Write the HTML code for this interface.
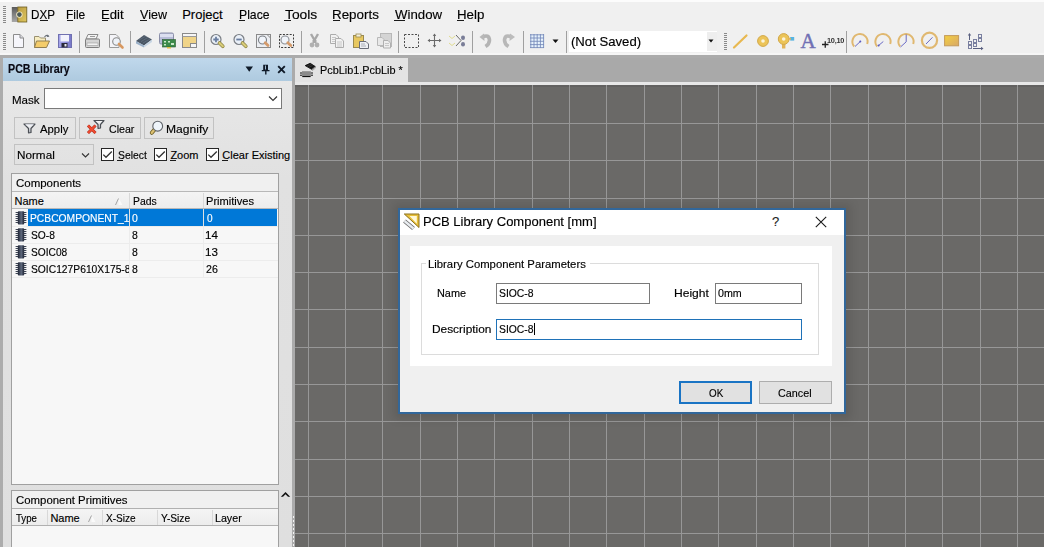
<!DOCTYPE html>
<html><head><meta charset="utf-8">
<style>
*{margin:0;padding:0;box-sizing:border-box}
html,body{width:1044px;height:547px;overflow:hidden;background:#f0f0f0;font-family:"Liberation Sans",sans-serif;color:#1a1a1a}
.a{position:absolute}
.t{position:absolute;white-space:pre;line-height:1;transform-origin:0 0;-webkit-text-stroke:0.15px currentColor}
svg{position:absolute;overflow:visible}
</style></head><body>
<div class="a" style="left:0px;top:0px;width:1044px;height:28px;background:#f0f0f0"></div>
<div class="a" style="left:0px;top:0px;width:1044px;height:1.5px;background:#fcfcfc"></div>
<div class="a" style="left:0px;top:28px;width:1044px;height:27px;background:#f0f0f0"></div>
<div class="a" style="left:0px;top:55px;width:1044px;height:3px;background:#ababab"></div>
<div class="a" style="left:0px;top:53px;width:1044px;height:2px;background:#f6f6f6"></div>
<div class="a" style="left:3px;top:6px;width:3px;height:1px;background:#8a8a8a"></div><div class="a" style="left:3px;top:8px;width:3px;height:1px;background:#8a8a8a"></div><div class="a" style="left:3px;top:10px;width:3px;height:1px;background:#8a8a8a"></div><div class="a" style="left:3px;top:12px;width:3px;height:1px;background:#8a8a8a"></div><div class="a" style="left:3px;top:14px;width:3px;height:1px;background:#8a8a8a"></div><div class="a" style="left:3px;top:16px;width:3px;height:1px;background:#8a8a8a"></div><div class="a" style="left:3px;top:18px;width:3px;height:1px;background:#8a8a8a"></div><div class="a" style="left:3px;top:20px;width:3px;height:1px;background:#8a8a8a"></div><div class="a" style="left:3px;top:22px;width:3px;height:1px;background:#8a8a8a"></div>
<div class="a" style="left:3px;top:33px;width:3px;height:1px;background:#8a8a8a"></div><div class="a" style="left:3px;top:35px;width:3px;height:1px;background:#8a8a8a"></div><div class="a" style="left:3px;top:37px;width:3px;height:1px;background:#8a8a8a"></div><div class="a" style="left:3px;top:39px;width:3px;height:1px;background:#8a8a8a"></div><div class="a" style="left:3px;top:41px;width:3px;height:1px;background:#8a8a8a"></div><div class="a" style="left:3px;top:43px;width:3px;height:1px;background:#8a8a8a"></div><div class="a" style="left:3px;top:45px;width:3px;height:1px;background:#8a8a8a"></div><div class="a" style="left:3px;top:47px;width:3px;height:1px;background:#8a8a8a"></div><div class="a" style="left:3px;top:49px;width:3px;height:1px;background:#8a8a8a"></div>
<div class="a" style="left:724px;top:33px;width:3px;height:1px;background:#8a8a8a"></div><div class="a" style="left:724px;top:35px;width:3px;height:1px;background:#8a8a8a"></div><div class="a" style="left:724px;top:37px;width:3px;height:1px;background:#8a8a8a"></div><div class="a" style="left:724px;top:39px;width:3px;height:1px;background:#8a8a8a"></div><div class="a" style="left:724px;top:41px;width:3px;height:1px;background:#8a8a8a"></div><div class="a" style="left:724px;top:43px;width:3px;height:1px;background:#8a8a8a"></div><div class="a" style="left:724px;top:45px;width:3px;height:1px;background:#8a8a8a"></div><div class="a" style="left:724px;top:47px;width:3px;height:1px;background:#8a8a8a"></div><div class="a" style="left:724px;top:49px;width:3px;height:1px;background:#8a8a8a"></div>
<div class="a" style="left:79px;top:31px;width:1px;height:22px;background:#a0a0a0"></div>
<div class="a" style="left:130px;top:31px;width:1px;height:22px;background:#a0a0a0"></div>
<div class="a" style="left:204px;top:31px;width:1px;height:22px;background:#a0a0a0"></div>
<div class="a" style="left:301px;top:31px;width:1px;height:22px;background:#a0a0a0"></div>
<div class="a" style="left:398px;top:31px;width:1px;height:22px;background:#a0a0a0"></div>
<div class="a" style="left:472px;top:31px;width:1px;height:22px;background:#a0a0a0"></div>
<div class="a" style="left:523px;top:31px;width:1px;height:22px;background:#a0a0a0"></div>
<div class="a" style="left:566px;top:31px;width:1px;height:22px;background:#a0a0a0"></div>
<div class="a" style="left:846px;top:31px;width:1px;height:22px;background:#a0a0a0"></div>
<div class="a" style="left:0px;top:58px;width:3px;height:489px;background:#acacac"></div>
<div class="a" style="left:3px;top:58px;width:289px;height:489px;background:linear-gradient(#e9e9e9,#e1e1e1 120px,#dfdfdf)"></div>
<div class="a" style="left:3px;top:58px;width:289px;height:23px;background:linear-gradient(#c0d8ec,#aecadf)"></div>
<div class="a" style="left:292px;top:58px;width:3px;height:489px;background:#ababab"></div>
<div class="a" style="left:44px;top:88px;width:238px;height:21px;background:#fff;border:1px solid #7a7a7a"></div>
<div class="a" style="left:14px;top:117px;width:62px;height:22px;background:transparent;border:1px solid #c2c2c2"></div>
<div class="a" style="left:79px;top:117px;width:62px;height:22px;background:transparent;border:1px solid #c2c2c2"></div>
<div class="a" style="left:144px;top:117px;width:70px;height:22px;background:transparent;border:1px solid #c2c2c2"></div>
<div class="a" style="left:14px;top:144px;width:80px;height:21px;background:transparent;border:1px solid #c2c2c2"></div>
<div class="a" style="left:101px;top:148px;width:13px;height:13px;background:#fff;border:1.2px solid #262626"></div>
<div class="a" style="left:154px;top:148px;width:13px;height:13px;background:#fff;border:1.2px solid #262626"></div>
<div class="a" style="left:206px;top:148px;width:13px;height:13px;background:#fff;border:1.2px solid #262626"></div>
<div class="a" style="left:11px;top:173px;width:268px;height:312px;background:#f7f7f7;border:1px solid #a0a0a0"></div>
<div class="a" style="left:12px;top:174px;width:266px;height:18px;background:#f0f0f0"></div>
<div class="a" style="left:12px;top:191px;width:266px;height:1px;background:#b8b8b8"></div>
<div class="a" style="left:12px;top:192px;width:266px;height:17px;background:linear-gradient(#f4f4f4,#ececec)"></div>
<div class="a" style="left:12px;top:208px;width:266px;height:1px;background:#b8b8b8"></div>
<div class="a" style="left:129px;top:193px;width:1px;height:15px;background:#d8d8d8"></div>
<div class="a" style="left:203px;top:193px;width:1px;height:15px;background:#d8d8d8"></div>
<div class="a" style="left:28px;top:209px;width:249px;height:17px;background:#0078d7"></div>
<div class="a" style="left:129px;top:209px;width:1px;height:17px;background:#e0e0e0"></div>
<div class="a" style="left:203px;top:209px;width:1px;height:17px;background:#e0e0e0"></div>
<div class="a" style="left:12px;top:226px;width:266px;height:1px;background:#ececec"></div>
<div class="a" style="left:12px;top:243px;width:266px;height:1px;background:#ececec"></div>
<div class="a" style="left:12px;top:260px;width:266px;height:1px;background:#ececec"></div>
<div class="a" style="left:12px;top:277px;width:266px;height:1px;background:#ececec"></div>
<div class="a" style="left:129px;top:226px;width:1px;height:17px;background:#ececec"></div>
<div class="a" style="left:203px;top:226px;width:1px;height:17px;background:#ececec"></div>
<div class="a" style="left:129px;top:243px;width:1px;height:17px;background:#ececec"></div>
<div class="a" style="left:203px;top:243px;width:1px;height:17px;background:#ececec"></div>
<div class="a" style="left:129px;top:260px;width:1px;height:17px;background:#ececec"></div>
<div class="a" style="left:203px;top:260px;width:1px;height:17px;background:#ececec"></div>
<div class="a" style="left:11px;top:490px;width:268px;height:70px;background:#f7f7f7;border:1px solid #a0a0a0"></div>
<div class="a" style="left:12px;top:491px;width:266px;height:17px;background:#f0f0f0"></div>
<div class="a" style="left:12px;top:508px;width:266px;height:1px;background:#b0b0b0"></div>
<div class="a" style="left:12px;top:509px;width:266px;height:17px;background:linear-gradient(#f4f4f4,#ececec)"></div>
<div class="a" style="left:12px;top:525px;width:266px;height:1px;background:#b0b0b0"></div>
<div class="a" style="left:47px;top:510px;width:1px;height:15px;background:#d8d8d8"></div>
<div class="a" style="left:102px;top:510px;width:1px;height:15px;background:#d8d8d8"></div>
<div class="a" style="left:157px;top:510px;width:1px;height:15px;background:#d8d8d8"></div>
<div class="a" style="left:212px;top:510px;width:1px;height:15px;background:#d8d8d8"></div>
<div class="a" style="left:295px;top:58px;width:749px;height:24px;background:#a9a9a9"></div>
<div class="a" style="left:295px;top:58px;width:113px;height:24px;background:#e3e3e3"></div>
<div class="a" style="left:295px;top:82px;width:749px;height:3px;background:#e8e8e8"></div>
<div class="a" style="left:295px;top:85px;width:749px;height:462px;background:#6a6967"></div>
<div class="a" style="left:295px;top:85px;width:749px;height:2px;background:#626160"></div>
<div class="a" style="left:308px;top:85px;width:1px;height:462px;background:#979797"></div><div class="a" style="left:345px;top:85px;width:1px;height:462px;background:#979797"></div><div class="a" style="left:382px;top:85px;width:1px;height:462px;background:#979797"></div><div class="a" style="left:420px;top:85px;width:1px;height:462px;background:#979797"></div><div class="a" style="left:457px;top:85px;width:1px;height:462px;background:#979797"></div><div class="a" style="left:494px;top:85px;width:1px;height:462px;background:#979797"></div><div class="a" style="left:532px;top:85px;width:1px;height:462px;background:#979797"></div><div class="a" style="left:569px;top:85px;width:1px;height:462px;background:#979797"></div><div class="a" style="left:606px;top:85px;width:1px;height:462px;background:#979797"></div><div class="a" style="left:644px;top:85px;width:1px;height:462px;background:#979797"></div><div class="a" style="left:681px;top:85px;width:1px;height:462px;background:#979797"></div><div class="a" style="left:718px;top:85px;width:1px;height:462px;background:#979797"></div><div class="a" style="left:756px;top:85px;width:1px;height:462px;background:#979797"></div><div class="a" style="left:793px;top:85px;width:1px;height:462px;background:#979797"></div><div class="a" style="left:830px;top:85px;width:1px;height:462px;background:#979797"></div><div class="a" style="left:868px;top:85px;width:1px;height:462px;background:#979797"></div><div class="a" style="left:905px;top:85px;width:1px;height:462px;background:#979797"></div><div class="a" style="left:942px;top:85px;width:1px;height:462px;background:#979797"></div><div class="a" style="left:980px;top:85px;width:1px;height:462px;background:#979797"></div><div class="a" style="left:1017px;top:85px;width:1px;height:462px;background:#979797"></div><div class="a" style="left:295px;top:123px;width:749px;height:1px;background:#979797"></div><div class="a" style="left:295px;top:160px;width:749px;height:1px;background:#979797"></div><div class="a" style="left:295px;top:198px;width:749px;height:1px;background:#979797"></div><div class="a" style="left:295px;top:235px;width:749px;height:1px;background:#979797"></div><div class="a" style="left:295px;top:272px;width:749px;height:1px;background:#979797"></div><div class="a" style="left:295px;top:309px;width:749px;height:1px;background:#979797"></div><div class="a" style="left:295px;top:347px;width:749px;height:1px;background:#979797"></div><div class="a" style="left:295px;top:384px;width:749px;height:1px;background:#979797"></div><div class="a" style="left:295px;top:421px;width:749px;height:1px;background:#979797"></div><div class="a" style="left:295px;top:459px;width:749px;height:1px;background:#979797"></div><div class="a" style="left:295px;top:496px;width:749px;height:1px;background:#979797"></div><div class="a" style="left:295px;top:533px;width:749px;height:1px;background:#979797"></div>
<div class="a" style="left:569px;top:31px;width:148px;height:21px;background:#fff"></div>
<div class="a" style="left:707px;top:32px;width:10px;height:19px;background:#eeeeee"></div>
<div class="a" style="left:394px;top:204px;width:457px;height:215px;background:rgba(0,0,0,0.10);filter:blur(4px)"></div>
<div class="a" style="left:398px;top:208px;width:448px;height:206px;background:#f0f0f0;border:2px solid #31679b"></div>
<div class="a" style="left:400px;top:210px;width:444px;height:25px;background:#fff"></div>
<div class="a" style="left:410px;top:246px;width:422px;height:120px;background:#fff"></div>
<div class="a" style="left:421px;top:263px;width:398px;height:92px;border:1px solid #dcdcdc"></div>
<div class="a" style="left:426px;top:258px;width:164px;height:10px;background:#fff"></div>
<div class="a" style="left:496px;top:283px;width:154px;height:21px;background:#fff;border:1px solid #7a7a7a"></div>
<div class="a" style="left:715px;top:283px;width:87px;height:21px;background:#fff;border:1px solid #7a7a7a"></div>
<div class="a" style="left:496px;top:319px;width:306px;height:21px;background:#fff;border:1px solid #1f72b8"></div>
<div class="a" style="left:679px;top:381px;width:73px;height:23px;background:#e1e1e1;border:2px solid #1a74c4"></div>
<div class="a" style="left:759px;top:381px;width:73px;height:23px;background:#e1e1e1;border:1px solid #adadad"></div>
<svg style="left:11px;top:7px" width="16" height="15" viewBox="0 0 16 15"><defs><linearGradient id="lg1" x1="0" y1="0" x2="0" y2="1"><stop offset="0" stop-color="#5a5a5a"/><stop offset="1" stop-color="#a8a8a8"/></linearGradient>
<linearGradient id="lg2" x1="0" y1="0" x2="1" y2="1"><stop offset="0" stop-color="#b89a40"/><stop offset="1" stop-color="#e0c860"/></linearGradient></defs>
<rect x="0.8" y="0" width="6" height="15" fill="url(#lg1)"/><rect x="6.8" y="0" width="9" height="15" fill="url(#lg2)"/>
<rect x="6.8" y="0" width="9" height="15" fill="none" stroke="#6a5a20" stroke-width="0.8"/>
<circle cx="8.4" cy="7.6" r="3.2" fill="#f0e8c0"/><circle cx="8.4" cy="7.6" r="2.3" fill="#4a5858"/></svg>
<svg style="left:12px;top:33px" width="13" height="16" viewBox="0 0 13 16"><path d="M1.5,1.5 H8 L11.5,5 V14.5 H1.5 Z" fill="#f6f6fb" stroke="#8c8c8c"/><path d="M8,1.5 V5 H11.5" fill="#d8d8e0" stroke="#8c8c8c"/></svg>
<svg style="left:33px;top:33px" width="18" height="16" viewBox="0 0 18 16"><path d="M1.5,3.5 H6 L7.5,5 H12.5 V14.5 H1.5 Z" fill="#f6ecc0" stroke="#9a9070"/>
<path d="M3.5,8 H16.5 L13.5,14.5 H1.5 Z" fill="#f4cc6a" stroke="#927e50"/>
<path d="M11.5,4 Q13.5,1.5 15.5,3" fill="none" stroke="#6a7078" stroke-width="1.2"/><path d="M14.5,1.6 L16.5,3.8 L13.8,4.1 Z" fill="#6a7078"/></svg>
<svg style="left:57px;top:33px" width="16" height="16" viewBox="0 0 16 16"><defs><linearGradient id="sg" x1="0" y1="0" x2="1" y2="0"><stop offset="0" stop-color="#a8a8ec"/><stop offset="1" stop-color="#7878c8"/></linearGradient></defs><rect x="1.5" y="1.5" width="13" height="13" fill="url(#sg)" stroke="#7070b0"/>
<rect x="3.5" y="2" width="8.5" height="6.5" fill="#f2f2fc"/><rect x="4.5" y="10" width="6" height="4.5" fill="#2a2a3a"/><rect x="7.5" y="11" width="2" height="2.5" fill="#e8e8f0"/></svg>
<svg style="left:84px;top:33px" width="17" height="16" viewBox="0 0 17 16"><path d="M4,1.5 H14 L12,6 H2 Z" fill="#f4f4f4" stroke="#8a8a8a"/>
<rect x="1.5" y="6" width="14" height="8.5" rx="1" fill="#d4d4d4" stroke="#7e7e7e"/><rect x="3" y="10" width="11" height="2.5" fill="#f2f2f2" stroke="#9a9a9a" stroke-width="0.6"/>
<line x1="6" y1="3.5" x2="11" y2="3.5" stroke="#9a9a9a"/></svg>
<svg style="left:108px;top:33px" width="17" height="17" viewBox="0 0 17 17"><path d="M1.5,1.5 H8 L11,4.5 V14.5 H1.5 Z" fill="#f4f4f8" stroke="#9a9a9a"/>
<circle cx="8.5" cy="8.5" r="3.8" fill="#eef2f8" stroke="#8a8a8a" stroke-width="1.1"/><path d="M11,11 L14.5,14.5" stroke="#d89860" stroke-width="2.6" stroke-linecap="round"/></svg>
<svg style="left:135px;top:33px" width="18" height="15" viewBox="0 0 18 15"><path d="M1,8 L9,2 L17,6.5 L9,12.5 Z" fill="#4a5664"/><path d="M1,8 V10.5 L9,14.5 V12.5 Z" fill="#9ab0c8"/><path d="M9,12.5 V14.5 L17,9 V6.5 Z" fill="#c8d6e4"/>
<path d="M4,7 L11,3 M6,8.6 L13,4.4 M8,10 L15,6" stroke="#6a7888" stroke-width="0.6"/></svg>
<svg style="left:159px;top:32px" width="17" height="17" viewBox="0 0 17 17"><rect x="0.5" y="1" width="14" height="11" rx="1.5" fill="#b8bcd8" stroke="#8a8ea8"/><rect x="1" y="2" width="13" height="3" fill="#dcdff0"/>
<rect x="3.5" y="7.5" width="13" height="7.5" fill="#3c8a4a" stroke="#2a5a30" stroke-width="0.6"/><rect x="5" y="9" width="2" height="1.5" fill="#c8e8c8"/><rect x="9" y="9" width="2" height="1.5" fill="#c8e8c8"/><rect x="5" y="12" width="2" height="1.5" fill="#c8e8c8"/><rect x="12" y="11" width="3" height="2" fill="#c8e8c8"/>
<rect x="8" y="15" width="4" height="1.5" fill="#e0c040"/></svg>
<svg style="left:181px;top:32px" width="17" height="17" viewBox="0 0 17 17"><rect x="1.5" y="1.5" width="14" height="14" fill="#f0d488" stroke="#8a8a8a"/><rect x="2" y="2" width="13" height="2.5" fill="#f6f6f6"/><line x1="1.5" y1="4.5" x2="15.5" y2="4.5" stroke="#9a9a9a"/>
<rect x="9.5" y="11.5" width="6" height="4" fill="#f6f6f6" stroke="#8a8a8a"/></svg>
<svg style="left:209px;top:33px" width="16" height="16" viewBox="0 0 16 16"><circle cx="7" cy="6.5" r="5" fill="#eaf0f8" stroke="#7a7e84" stroke-width="1.2"/><path d="M4.3,6.5 H9.7 M7,3.8 V9.2" stroke="#6a7ea0" stroke-width="1.8"/><path d="M10.5,10 L13.8,13.3" stroke="#8a8040" stroke-width="3.6" stroke-linecap="round"/><path d="M10.5,10 L13.8,13.3" stroke="#d8cc78" stroke-width="2.2" stroke-linecap="round"/></svg>
<svg style="left:232px;top:33px" width="16" height="16" viewBox="0 0 16 16"><circle cx="7" cy="6.5" r="5" fill="#eaf0f8" stroke="#7a7e84" stroke-width="1.2"/><path d="M4.3,6.5 H9.7" stroke="#6a7ea0" stroke-width="1.8"/><path d="M10.5,10 L13.8,13.3" stroke="#8a8040" stroke-width="3.6" stroke-linecap="round"/><path d="M10.5,10 L13.8,13.3" stroke="#d8cc78" stroke-width="2.2" stroke-linecap="round"/></svg>
<svg style="left:255px;top:33px" width="17" height="16" viewBox="0 0 17 16"><rect x="1.5" y="1.5" width="14" height="13" fill="#eceef2" stroke="#8a8a8a"/><path d="M12,1.5 L15.5,5" stroke="#8a8a8a"/>
<circle cx="7.5" cy="7" r="4" fill="#f0f4fa" stroke="#7a7e84" stroke-width="1.1"/><path d="M10.2,9.8 L13,12.6" stroke="#d49a6a" stroke-width="2.8" stroke-linecap="round"/></svg>
<svg style="left:278px;top:33px" width="17" height="16" viewBox="0 0 17 16"><rect x="1.5" y="1.5" width="14" height="13" fill="none" stroke="#3a3a3a" stroke-dasharray="2,1.4"/>
<circle cx="7" cy="7" r="4" fill="#f0f4fa" stroke="#8a8e94" stroke-width="1.1"/><path d="M9.8,9.8 L12.8,12.6" stroke="#d49a6a" stroke-width="2.8" stroke-linecap="round"/></svg>
<svg style="left:309px;top:33px" width="11" height="15" viewBox="0 0 11 15"><path d="M2,1 L6,8 M9,1 L5,8" stroke="#a8a8a8" stroke-width="2.4"/><circle cx="3" cy="12" r="2.4" fill="#b0b0b0"/><circle cx="8" cy="12" r="2.4" fill="#b0b0b0"/><rect x="3.5" y="7" width="4" height="3" fill="#a8a8a8"/></svg>
<svg style="left:329px;top:33px" width="17" height="15" viewBox="0 0 17 15"><path d="M1.5,1.5 H7 L9.5,4 V10.5 H1.5 Z" fill="#f2f2f2" stroke="#acacac"/><path d="M6.5,5.5 H12 L14.5,8 V14.5 H6.5 Z" fill="#f2f2f2" stroke="#acacac"/>
<path d="M3,4.5 H7 M3,6.5 H7 M3,8.5 H6 M8,9 H13 M8,11 H13 M8,13 H13" stroke="#bcbcbc" stroke-width="0.8"/></svg>
<svg style="left:352px;top:33px" width="18" height="16" viewBox="0 0 18 16"><rect x="1.5" y="2.5" width="10" height="12" fill="#e8c860" stroke="#9a8a50"/><rect x="4" y="1" width="5" height="3" fill="#f6f0d8" stroke="#9a8a50" stroke-width="0.8"/>
<path d="M7.5,8.5 H14 L16.5,11 V15.5 H7.5 Z" fill="#eef0f4" stroke="#6a6e78"/><path d="M9,11 H13 M9,13 H14" stroke="#9aa0a8" stroke-width="0.8"/></svg>
<svg style="left:376px;top:32px" width="17" height="17" viewBox="0 0 17 17"><rect x="4.5" y="1.5" width="11" height="13" fill="#d4d4d4" stroke="#b8b8b8"/><path d="M1.5,5.5 H6 L8,7.5 V13.5 H1.5 Z" fill="#e8e8e8" stroke="#b8b8b8"/>
<path d="M7.5,8.5 H12 L14.5,11 V16 H7.5 Z" fill="#eeeeee" stroke="#b0b0b0"/><path d="M9,11.5 H13 M9,13.5 H13" stroke="#bcbcbc" stroke-width="0.8"/></svg>
<svg style="left:403px;top:33px" width="17" height="16" viewBox="0 0 17 16"><rect x="1.5" y="1.5" width="14" height="13" fill="none" stroke="#4a4a4a" stroke-dasharray="2,1.5"/></svg>
<svg style="left:427px;top:33px" width="15" height="15" viewBox="0 0 15 15"><path d="M7.5,1 V14 M1,7.5 H14" stroke="#6a6a6a" stroke-width="1.1"/><path d="M7.5,0.5 L5.8,3 H9.2 Z M7.5,14.5 L5.8,12 H9.2 Z M0.5,7.5 L3,5.8 V9.2 Z M14.5,7.5 L12,5.8 V9.2 Z" fill="#6a6a6a"/></svg>
<svg style="left:448px;top:33px" width="18" height="15" viewBox="0 0 18 15"><path d="M1,3 L4,5.5 L7,3 M1,10 L4,12.5 L7,10" fill="none" stroke="#e0dc90" stroke-width="1"/><path d="M8,2 L13,7.5 L8,13" fill="none" stroke="#5a5a5a" stroke-width="0.9"/>
<ellipse cx="15" cy="4.7" rx="2" ry="2.3" fill="#7a7e98"/><ellipse cx="15" cy="11.3" rx="2" ry="2.3" fill="#7a7e98"/></svg>
<svg style="left:479px;top:33px" width="13" height="15" viewBox="0 0 13 15"><path d="M3.5,4 Q10,1 10.5,7 Q10.5,11 6.5,13.5" fill="none" stroke="#b4b4b4" stroke-width="3.6"/><path d="M0.5,4 L5,0.5 L5.5,8 Z" fill="#b8b8b8"/></svg>
<svg style="left:502px;top:33px" width="14" height="15" viewBox="0 0 14 15"><path d="M9.5,4 Q3,1 2.5,7 Q2.5,11 6.5,13.5" fill="none" stroke="#b8b8b8" stroke-width="3.6"/><path d="M13,4 L8,0.5 L7.5,8 Z" fill="#bcbcbc"/></svg>
<svg style="left:529px;top:33px" width="16" height="16" viewBox="0 0 16 16"><rect x="1" y="1.5" width="14" height="13" fill="#e6f2fc"/>
<path d="M1.8,1 V15 M5,1 V15 M8.2,1 V15 M11.4,1 V15 M14.6,1 V15 M1,1.8 H15 M1,5 H15 M1,8.3 H15 M1,11.6 H15 M1,14.6 H15" stroke="#7488b8" stroke-width="0.85"/></svg>
<svg style="left:552px;top:39px" width="7" height="5" viewBox="0 0 7 5"><path d="M0.5,0.5 H6.5 L3.5,4 Z" fill="#111"/></svg>
<svg style="left:708px;top:39px" width="6" height="5" viewBox="0 0 6 5"><path d="M0.5,0.5 H5.5 L3,3.5 Z" fill="#111"/></svg>
<svg style="left:733px;top:34px" width="15" height="15" viewBox="0 0 15 15"><path d="M1,13.5 L13.5,1.5" stroke="#e8b850" stroke-width="2.2" stroke-linecap="round"/></svg>
<svg style="left:756px;top:34px" width="14" height="14" viewBox="0 0 14 14"><circle cx="7" cy="7" r="5.4" fill="#ecc458" stroke="#d2a848" stroke-width="1"/><circle cx="7" cy="7" r="1.8" fill="#fbf4dc"/></svg>
<svg style="left:777px;top:33px" width="18" height="16" viewBox="0 0 18 16"><rect x="5" y="7" width="3.4" height="8.5" fill="#e2b458"/><circle cx="6.7" cy="6" r="5.4" fill="#ecc458" stroke="#d2a848"/><circle cx="6.7" cy="6" r="1.8" fill="#fbf4dc"/><rect x="13.2" y="4" width="4" height="3.6" fill="#58b4e0"/><rect x="11" y="5" width="3" height="1.6" fill="#e2b458"/></svg>
<span class="t" style="left:800.5px;top:31px;font-family:'Liberation Serif',serif;font-size:21px;font-weight:normal;color:#7070b4;line-height:1;-webkit-text-stroke:0.5px #7070b4">A</span>
<svg style="left:821px;top:40px" width="9" height="9" viewBox="0 0 9 9"><path d="M1,4.5 H7.5 M4.25,1.3 V7.8" stroke="#222" stroke-width="1.3"/></svg>
<span class="t" style="left:827.3px;top:36.5px;font-size:8px;font-weight:bold;color:#333;letter-spacing:-0.3px;transform:scaleX(0.92);-webkit-text-stroke:0">10,10</span>
<svg style="left:851px;top:33px" width="19" height="16" viewBox="0 0 19 16"><path d="M3.2,13.5 A7.6,7.6 0 1 1 16.2,11" fill="none" stroke="#e0b870" stroke-width="2"/><path d="M4,13.5 L9.3,8.5" stroke="#5a5ac0" stroke-width="0.9"/><circle cx="9.3" cy="8.5" r="1" fill="#5a5ac0"/></svg>
<svg style="left:874px;top:33px" width="19" height="16" viewBox="0 0 19 16"><path d="M3.2,13.5 A7.6,7.6 0 1 1 16.2,11" fill="none" stroke="#e0b870" stroke-width="2"/><path d="M4,13 L9.3,8.5" stroke="#5a5ac0" stroke-width="0.9"/><circle cx="4.6" cy="12.5" r="1" fill="#5a5ac0"/></svg>
<svg style="left:897px;top:33px" width="19" height="16" viewBox="0 0 19 16"><path d="M3.2,13.5 A7.6,7.6 0 1 1 16.2,11" fill="none" stroke="#e0b870" stroke-width="2"/><path d="M3.5,14 L9.2,8.8 V1.5" fill="none" stroke="#5a5ac0" stroke-width="0.9"/></svg>
<svg style="left:920px;top:31px" width="19" height="19" viewBox="0 0 19 19"><circle cx="9.5" cy="9.3" r="7.6" fill="none" stroke="#e0b870" stroke-width="2.2"/><path d="M6,13 L12.5,6.3" stroke="#5a5ac0" stroke-width="0.9"/></svg>
<svg style="left:944px;top:35px" width="16" height="12" viewBox="0 0 16 12"><defs><linearGradient id="rg" x1="0" y1="0" x2="1" y2="1"><stop offset="0" stop-color="#f4d040"/><stop offset="1" stop-color="#d8a868"/></linearGradient></defs><rect x="0.6" y="0.6" width="14" height="10.2" fill="url(#rg)" stroke="#c49a5a" stroke-width="1"/></svg>
<svg style="left:967px;top:33px" width="17" height="17" viewBox="0 0 17 17"><g fill="none" stroke="#7a80a0" stroke-width="1"><rect x="1.5" y="8.5" width="3" height="3"/><rect x="1.5" y="12.5" width="3" height="3"/><rect x="6.5" y="6.5" width="3" height="3"/><rect x="6.5" y="10.5" width="3" height="3"/><rect x="11.5" y="1.5" width="3" height="3"/><rect x="11.5" y="5.5" width="3" height="3"/></g>
<path d="M2.5,7 V1 M6,15.5 H15.5" stroke="#5a6080" stroke-width="1"/><path d="M2.5,0 L0.8,2.6 H4.2 Z M16.5,15.5 L14,13.8 V17.2 Z" fill="#5a6080"/></svg>
<svg style="left:245px;top:66px" width="9" height="7" viewBox="0 0 9 7"><path d="M0.5,0.5 H8 L4.25,5.8 Z" fill="#0f1a28"/></svg>
<svg style="left:261px;top:64px" width="9" height="11" viewBox="0 0 9 11"><path d="M2.2,0.8 H7 V6 H8.5 V7.3 H0.8 V6 H2.2 Z" fill="#0f1a28"/><rect x="4" y="1.5" width="1" height="4" fill="#a0bcd4"/><rect x="4.1" y="7" width="1.4" height="3.5" fill="#0f1a28"/></svg>
<svg style="left:277px;top:65px" width="9" height="9" viewBox="0 0 9 9"><path d="M1.2,1.2 L7.8,7.8 M7.8,1.2 L1.2,7.8" stroke="#0f1a28" stroke-width="1.9"/></svg>
<svg style="left:299px;top:61px" width="19" height="17" viewBox="0 0 19 17"><path d="M6.2,4.6 L11.2,2.3 L16.3,5.6 L12.8,8.4 Z" fill="#141414" stroke="#141414" stroke-width="0.9" stroke-linejoin="round"/>
<path d="M12.8,8.6 L16.5,5.6 L16.5,7 L13,9.8" fill="none" stroke="#9a9a9a" stroke-width="0.8"/><path d="M8,5.2 L12,3.5 M9.5,6.4 L13.5,4.6" stroke="#555" stroke-width="0.5"/>
<rect x="3" y="10.2" width="8.8" height="5.2" fill="#8a8a8a"/><rect x="3.3" y="15" width="8.3" height="1.1" fill="#111"/>
<path d="M1,12 H3 M1,14.2 H3 M11.8,12 H14 M11.8,14.2 H14" stroke="#111" stroke-width="1"/></svg>
<svg style="left:268px;top:95px" width="10" height="7" viewBox="0 0 10 7"><path d="M1,1.5 L5,5.5 L9,1.5" fill="none" stroke="#333" stroke-width="1.1"/></svg>
<svg style="left:81px;top:152px" width="10" height="7" viewBox="0 0 10 7"><path d="M1,1.5 L4.5,5 L8,1.5" fill="none" stroke="#333" stroke-width="1.1"/></svg>
<svg style="left:101px;top:148px" width="13" height="13" viewBox="0 0 13 13"><path d="M2.3,6.6 L5,9.3 L10.8,3.5" fill="none" stroke="#333" stroke-width="1.3"/></svg>
<svg style="left:154px;top:148px" width="13" height="13" viewBox="0 0 13 13"><path d="M2.3,6.6 L5,9.3 L10.8,3.5" fill="none" stroke="#333" stroke-width="1.3"/></svg>
<svg style="left:206px;top:148px" width="13" height="13" viewBox="0 0 13 13"><path d="M2.3,6.6 L5,9.3 L10.8,3.5" fill="none" stroke="#333" stroke-width="1.3"/></svg>
<svg style="left:23px;top:123px" width="13" height="11" viewBox="0 0 13 11"><defs><linearGradient id="fg" x1="0" y1="0" x2="0" y2="1"><stop offset="0" stop-color="#ffffff"/><stop offset="1" stop-color="#b8bcc4"/></linearGradient></defs><path d="M1,1 H12 L8,5.5 V9.5 L5.5,10 V5.5 Z" fill="url(#fg)" stroke="#4a4e54" stroke-width="1.2" stroke-linejoin="round"/><path d="M2.5,1.8 H10.5" stroke="#e8ecf4" stroke-width="1"/></svg>
<svg style="left:86px;top:119px" width="19" height="16" viewBox="0 0 19 16"><path d="M8,1.5 H18 L14.5,5.5 V9 L12,9.5 V5.5 Z" fill="url(#fg)" stroke="#4a4e54" stroke-width="1.2" stroke-linejoin="round"/>
<path d="M2,6.5 L9.5,14 M9.5,6.5 L2,14" stroke="#a83020" stroke-width="3"/><path d="M2,6.5 L9.5,14 M9.5,6.5 L2,14" stroke="#f04a30" stroke-width="1.8"/></svg>
<svg style="left:149px;top:119px" width="15" height="16" viewBox="0 0 15 16"><path d="M6,10 L2.8,13.8" stroke="#6a5a20" stroke-width="4" stroke-linecap="round"/><path d="M6,10 L2.8,13.8" stroke="#dcc070" stroke-width="2.4" stroke-linecap="round"/>
<circle cx="8.7" cy="7.2" r="4.9" fill="#eef4fa" stroke="#5e6268" stroke-width="1.1"/></svg>
<svg style="left:15px;top:211px" width="12" height="14" viewBox="0 0 12 14"><defs><linearGradient id="cg" x1="0" y1="0" x2="1" y2="0"><stop offset="0" stop-color="#1e2434"/><stop offset="0.55" stop-color="#5e687c"/><stop offset="1" stop-color="#1e2434"/></linearGradient></defs>
<path d="M0.6,1.5 H3 M0.6,3.5 H3 M0.6,5.5 H3 M0.6,7.5 H3 M0.6,9.5 H3 M0.6,11.5 H3 M9,1.5 H11.4 M9,3.5 H11.4 M9,5.5 H11.4 M9,7.5 H11.4 M9,9.5 H11.4 M9,11.5 H11.4" stroke="#2a3244" stroke-width="0.9"/>
<rect x="2.8" y="0.2" width="6.4" height="13.2" rx="1" fill="url(#cg)"/></svg>
<svg style="left:15px;top:228px" width="12" height="14" viewBox="0 0 12 14"><defs><linearGradient id="cg" x1="0" y1="0" x2="1" y2="0"><stop offset="0" stop-color="#1e2434"/><stop offset="0.55" stop-color="#5e687c"/><stop offset="1" stop-color="#1e2434"/></linearGradient></defs>
<path d="M0.6,1.5 H3 M0.6,3.5 H3 M0.6,5.5 H3 M0.6,7.5 H3 M0.6,9.5 H3 M0.6,11.5 H3 M9,1.5 H11.4 M9,3.5 H11.4 M9,5.5 H11.4 M9,7.5 H11.4 M9,9.5 H11.4 M9,11.5 H11.4" stroke="#2a3244" stroke-width="0.9"/>
<rect x="2.8" y="0.2" width="6.4" height="13.2" rx="1" fill="url(#cg)"/></svg>
<svg style="left:15px;top:245px" width="12" height="14" viewBox="0 0 12 14"><defs><linearGradient id="cg" x1="0" y1="0" x2="1" y2="0"><stop offset="0" stop-color="#1e2434"/><stop offset="0.55" stop-color="#5e687c"/><stop offset="1" stop-color="#1e2434"/></linearGradient></defs>
<path d="M0.6,1.5 H3 M0.6,3.5 H3 M0.6,5.5 H3 M0.6,7.5 H3 M0.6,9.5 H3 M0.6,11.5 H3 M9,1.5 H11.4 M9,3.5 H11.4 M9,5.5 H11.4 M9,7.5 H11.4 M9,9.5 H11.4 M9,11.5 H11.4" stroke="#2a3244" stroke-width="0.9"/>
<rect x="2.8" y="0.2" width="6.4" height="13.2" rx="1" fill="url(#cg)"/></svg>
<svg style="left:15px;top:262px" width="12" height="14" viewBox="0 0 12 14"><defs><linearGradient id="cg" x1="0" y1="0" x2="1" y2="0"><stop offset="0" stop-color="#1e2434"/><stop offset="0.55" stop-color="#5e687c"/><stop offset="1" stop-color="#1e2434"/></linearGradient></defs>
<path d="M0.6,1.5 H3 M0.6,3.5 H3 M0.6,5.5 H3 M0.6,7.5 H3 M0.6,9.5 H3 M0.6,11.5 H3 M9,1.5 H11.4 M9,3.5 H11.4 M9,5.5 H11.4 M9,7.5 H11.4 M9,9.5 H11.4 M9,11.5 H11.4" stroke="#2a3244" stroke-width="0.9"/>
<rect x="2.8" y="0.2" width="6.4" height="13.2" rx="1" fill="url(#cg)"/></svg>
<svg style="left:114px;top:197px" width="10" height="9" viewBox="0 0 10 9"><path d="M4.5,1 L8.5,8 H4.5 Z" fill="#fafafa"/><path d="M1.5,8 L4.5,1.5" stroke="#9a9a9a" stroke-width="0.9"/></svg>
<svg style="left:87px;top:514px" width="10" height="9" viewBox="0 0 10 9"><path d="M4.5,1 L8.5,8 H4.5 Z" fill="#fafafa"/><path d="M1.5,8 L4.5,1.5" stroke="#9a9a9a" stroke-width="0.9"/></svg>
<svg style="left:280px;top:491px" width="11" height="7" viewBox="0 0 11 7"><path d="M0.8,5.8 L5.5,1 L10.2,5.8 H8 L5.5,3.3 L3,5.8 Z" fill="#111"/></svg>
<div class="a" style="left:293px;top:516px;width:1px;height:2px;background:#f4f4f4"></div>
<div class="a" style="left:293px;top:520px;width:1px;height:2px;background:#f4f4f4"></div>
<div class="a" style="left:293px;top:524px;width:1px;height:2px;background:#f4f4f4"></div>
<div class="a" style="left:293px;top:528px;width:1px;height:2px;background:#f4f4f4"></div>
<div class="a" style="left:293px;top:532px;width:1px;height:2px;background:#f4f4f4"></div>
<div class="a" style="left:293px;top:536px;width:1px;height:2px;background:#f4f4f4"></div>
<div class="a" style="left:293px;top:540px;width:1px;height:2px;background:#f4f4f4"></div>
<div class="a" style="left:293px;top:544px;width:1px;height:2px;background:#f4f4f4"></div>
<svg style="left:403px;top:213px" width="17" height="16" viewBox="0 0 17 16"><path d="M1.3,1 H16 V14.5 Z" fill="#e8c03a" stroke="#8a7020" stroke-width="1"/><path d="M6.5,3 H13.8 V10.8 Z" fill="#fff8d8"/>
<path d="M1.5,8 L10.5,15.5" stroke="#6a6a6a" stroke-width="4.2"/><path d="M1.5,8 L10.5,15.5" stroke="#e8ecf0" stroke-width="2.4"/></svg>
<span class="t" style="left:772px;top:215px;font-size:13px;color:#222">?</span>
<svg style="left:815px;top:216px" width="12" height="12" viewBox="0 0 12 12"><path d="M0.8,0.8 L11.2,11.2 M11.2,0.8 L0.8,11.2" stroke="#1a1a1a" stroke-width="1.1"/></svg>
<span class="t" style="left:30.8px;top:8px;font-size:13px;font-weight:normal;color:#000;transform:scaleX(0.8960);">DXP</span>
<span class="t" style="left:66.28px;top:8px;font-size:13px;font-weight:normal;color:#000;transform:scaleX(0.9200);">File</span>
<span class="t" style="left:100.79px;top:8px;font-size:13px;font-weight:normal;color:#000;transform:scaleX(1.0091);">Edit</span>
<span class="t" style="left:140.1px;top:8px;font-size:13px;font-weight:normal;color:#000;transform:scaleX(0.9643);">View</span>
<span class="t" style="left:182.2px;top:8px;font-size:13px;font-weight:normal;color:#000;">Project</span>
<span class="t" style="left:238.56px;top:8px;font-size:13px;font-weight:normal;color:#000;transform:scaleX(0.9387);">Place</span>
<span class="t" style="left:284.8px;top:8px;font-size:13px;font-weight:normal;color:#000;transform:scaleX(1.0633);">Tools</span>
<span class="t" style="left:332.37px;top:8px;font-size:13px;font-weight:normal;color:#000;transform:scaleX(1.0295);">Reports</span>
<span class="t" style="left:394.9px;top:8px;font-size:13px;font-weight:normal;color:#000;transform:scaleX(1.0174);">Window</span>
<span class="t" style="left:456.88px;top:8px;font-size:13px;font-weight:normal;color:#000;transform:scaleX(1.0231);">Help</span>
<span class="t" style="left:571.35px;top:36px;font-size:12.5px;font-weight:normal;color:#000;transform:scaleX(1.0508);">(Not Saved)</span>
<span class="t" style="left:8.4px;top:63px;font-size:12px;font-weight:bold;color:#0a0a14;transform:scaleX(0.8914);">PCB Library</span>
<span class="t" style="left:319.51px;top:65px;font-size:11px;font-weight:normal;color:#000;transform:scaleX(0.9880);">PcbLib1.PcbLib *</span>
<span class="t" style="left:12.35px;top:95px;font-size:11px;font-weight:normal;color:#000;transform:scaleX(1.0480);">Mask</span>
<span class="t" style="left:40.2px;top:123.5px;font-size:11px;font-weight:normal;color:#000;transform:scaleX(1.0286);">Apply</span>
<span class="t" style="left:108.6px;top:123.5px;font-size:11px;font-weight:normal;color:#000;transform:scaleX(0.9654);">Clear</span>
<span class="t" style="left:166.4px;top:123.5px;font-size:11px;font-weight:normal;color:#000;transform:scaleX(1.0974);">Magnify</span>
<span class="t" style="left:17.44px;top:150px;font-size:11px;font-weight:normal;color:#000;transform:scaleX(1.0647);">Normal</span>
<span class="t" style="left:117.6px;top:150px;font-size:11px;font-weight:normal;color:#000;transform:scaleX(0.9419);">Select</span>
<span class="t" style="left:170.4px;top:150px;font-size:11px;font-weight:normal;color:#000;">Zoom</span>
<span class="t" style="left:222.3px;top:150px;font-size:11px;font-weight:normal;color:#000;">Clear Existing</span>
<span class="t" style="left:15.5px;top:178px;font-size:11px;font-weight:normal;color:#000;transform:scaleX(1.0435);">Components</span>
<span class="t" style="left:14.5px;top:196px;font-size:11px;font-weight:normal;color:#000;">Name</span>
<span class="t" style="left:132.75px;top:196px;font-size:11px;font-weight:normal;color:#000;transform:scaleX(0.9458);">Pads</span>
<span class="t" style="left:206.29px;top:196px;font-size:11px;font-weight:normal;color:#000;transform:scaleX(1.0064);">Primitives</span>
<span class="t" style="left:15.5px;top:495.2px;font-size:11px;font-weight:normal;color:#000;transform:scaleX(1.0364);">Component Primitives</span>
<span class="t" style="left:15.5px;top:512.7px;font-size:11px;font-weight:normal;color:#000;transform:scaleX(0.8792);">Type</span>
<span class="t" style="left:50.4px;top:512.7px;font-size:11px;font-weight:normal;color:#000;">Name</span>
<span class="t" style="left:106px;top:512.7px;font-size:11px;font-weight:normal;color:#000;transform:scaleX(0.9156);">X-Size</span>
<span class="t" style="left:160.9px;top:512.7px;font-size:11px;font-weight:normal;color:#000;transform:scaleX(0.9290);">Y-Size</span>
<span class="t" style="left:215.03px;top:512.7px;font-size:11px;font-weight:normal;color:#000;transform:scaleX(0.9704);">Layer</span>
<span class="t" style="left:132.2px;top:213px;font-size:11px;font-weight:normal;color:#ffffff;transform:scaleX(0.9500);">0</span>
<span class="t" style="left:206.6px;top:213px;font-size:11px;font-weight:normal;color:#ffffff;transform:scaleX(0.9167);">0</span>
<div class="a" style="left:0;top:0;width:128.5px;height:547px;overflow:hidden"><span class="t" style="left:29.87px;top:213px;font-size:11px;font-weight:normal;color:#ffffff;transform:scaleX(0.9350);">PCBCOMPONENT_1</span></div>
<div class="a" style="left:0;top:0;width:128.5px;height:547px;overflow:hidden"><span class="t" style="left:30.8px;top:264px;font-size:11px;font-weight:normal;color:#000;transform:scaleX(0.9350);">SOIC127P610X175-8</span></div>
<span class="t" style="left:30.8px;top:230.2px;font-size:11px;font-weight:normal;color:#000;transform:scaleX(0.9308);">SO-8</span>
<span class="t" style="left:132.2px;top:230.2px;font-size:11px;font-weight:normal;color:#000;transform:scaleX(0.9500);">8</span>
<span class="t" style="left:205.15px;top:230.2px;font-size:11px;font-weight:normal;color:#000;transform:scaleX(1.0545);">14</span>
<span class="t" style="left:30.8px;top:247.2px;font-size:11px;font-weight:normal;color:#000;transform:scaleX(0.9256);">SOIC08</span>
<span class="t" style="left:132.2px;top:247.2px;font-size:11px;font-weight:normal;color:#000;transform:scaleX(0.9500);">8</span>
<span class="t" style="left:205.15px;top:247.2px;font-size:11px;font-weight:normal;color:#000;transform:scaleX(1.0545);">13</span>
<span class="t" style="left:132.2px;top:264px;font-size:11px;font-weight:normal;color:#000;transform:scaleX(0.9500);">8</span>
<span class="t" style="left:206.2px;top:264px;font-size:11px;font-weight:normal;color:#000;transform:scaleX(0.9667);">26</span>
<span class="t" style="left:423.46px;top:216px;font-size:12.5px;font-weight:normal;color:#000;transform:scaleX(1.0406);">PCB Library Component [mm]</span>
<span class="t" style="left:428.17px;top:259px;font-size:11px;font-weight:normal;color:#000;transform:scaleX(1.0283);">Library Component Parameters</span>
<span class="t" style="left:436.81px;top:288px;font-size:11px;font-weight:normal;color:#000;transform:scaleX(0.9893);">Name</span>
<span class="t" style="left:499.1px;top:288px;font-size:11px;font-weight:normal;color:#000;transform:scaleX(0.9432);">SIOC-8</span>
<span class="t" style="left:674.4px;top:288px;font-size:11px;font-weight:normal;color:#000;transform:scaleX(1.0968);">Height</span>
<span class="t" style="left:718.1px;top:288px;font-size:11px;font-weight:normal;color:#000;transform:scaleX(0.9708);">0mm</span>
<span class="t" style="left:432.32px;top:323.8px;font-size:11px;font-weight:normal;color:#000;transform:scaleX(1.0796);">Description</span>
<span class="t" style="left:499.1px;top:323.8px;font-size:11px;font-weight:normal;color:#000;transform:scaleX(0.9432);">SIOC-8</span>
<span class="t" style="left:708.5px;top:388px;font-size:11px;font-weight:normal;color:#000;transform:scaleX(0.8937);">OK</span>
<span class="t" style="left:778.4px;top:388px;font-size:11px;font-weight:normal;color:#000;transform:scaleX(0.9794);">Cancel</span>
<div class="a" style="left:40px;top:20px;width:8px;height:1px;background:#1a1a1a"></div>
<div class="a" style="left:67px;top:20px;width:6px;height:1px;background:#1a1a1a"></div>
<div class="a" style="left:102px;top:20px;width:6px;height:1px;background:#1a1a1a"></div>
<div class="a" style="left:140px;top:20px;width:7px;height:1px;background:#1a1a1a"></div>
<div class="a" style="left:213px;top:20px;width:6px;height:1px;background:#1a1a1a"></div>
<div class="a" style="left:239px;top:20px;width:6px;height:1px;background:#1a1a1a"></div>
<div class="a" style="left:284px;top:20px;width:7px;height:1px;background:#1a1a1a"></div>
<div class="a" style="left:333px;top:20px;width:7px;height:1px;background:#1a1a1a"></div>
<div class="a" style="left:394px;top:20px;width:11px;height:1px;background:#1a1a1a"></div>
<div class="a" style="left:457px;top:20px;width:7px;height:1px;background:#1a1a1a"></div>
<div class="a" style="left:117px;top:159.5px;width:6px;height:1px;background:#1a1a1a"></div>
<div class="a" style="left:170px;top:159.5px;width:6px;height:1px;background:#1a1a1a"></div>
<div class="a" style="left:222px;top:159.5px;width:6px;height:1px;background:#1a1a1a"></div>
<div class="a" style="left:534px;top:323px;width:1px;height:12px;background:#000"></div>
</body></html>
